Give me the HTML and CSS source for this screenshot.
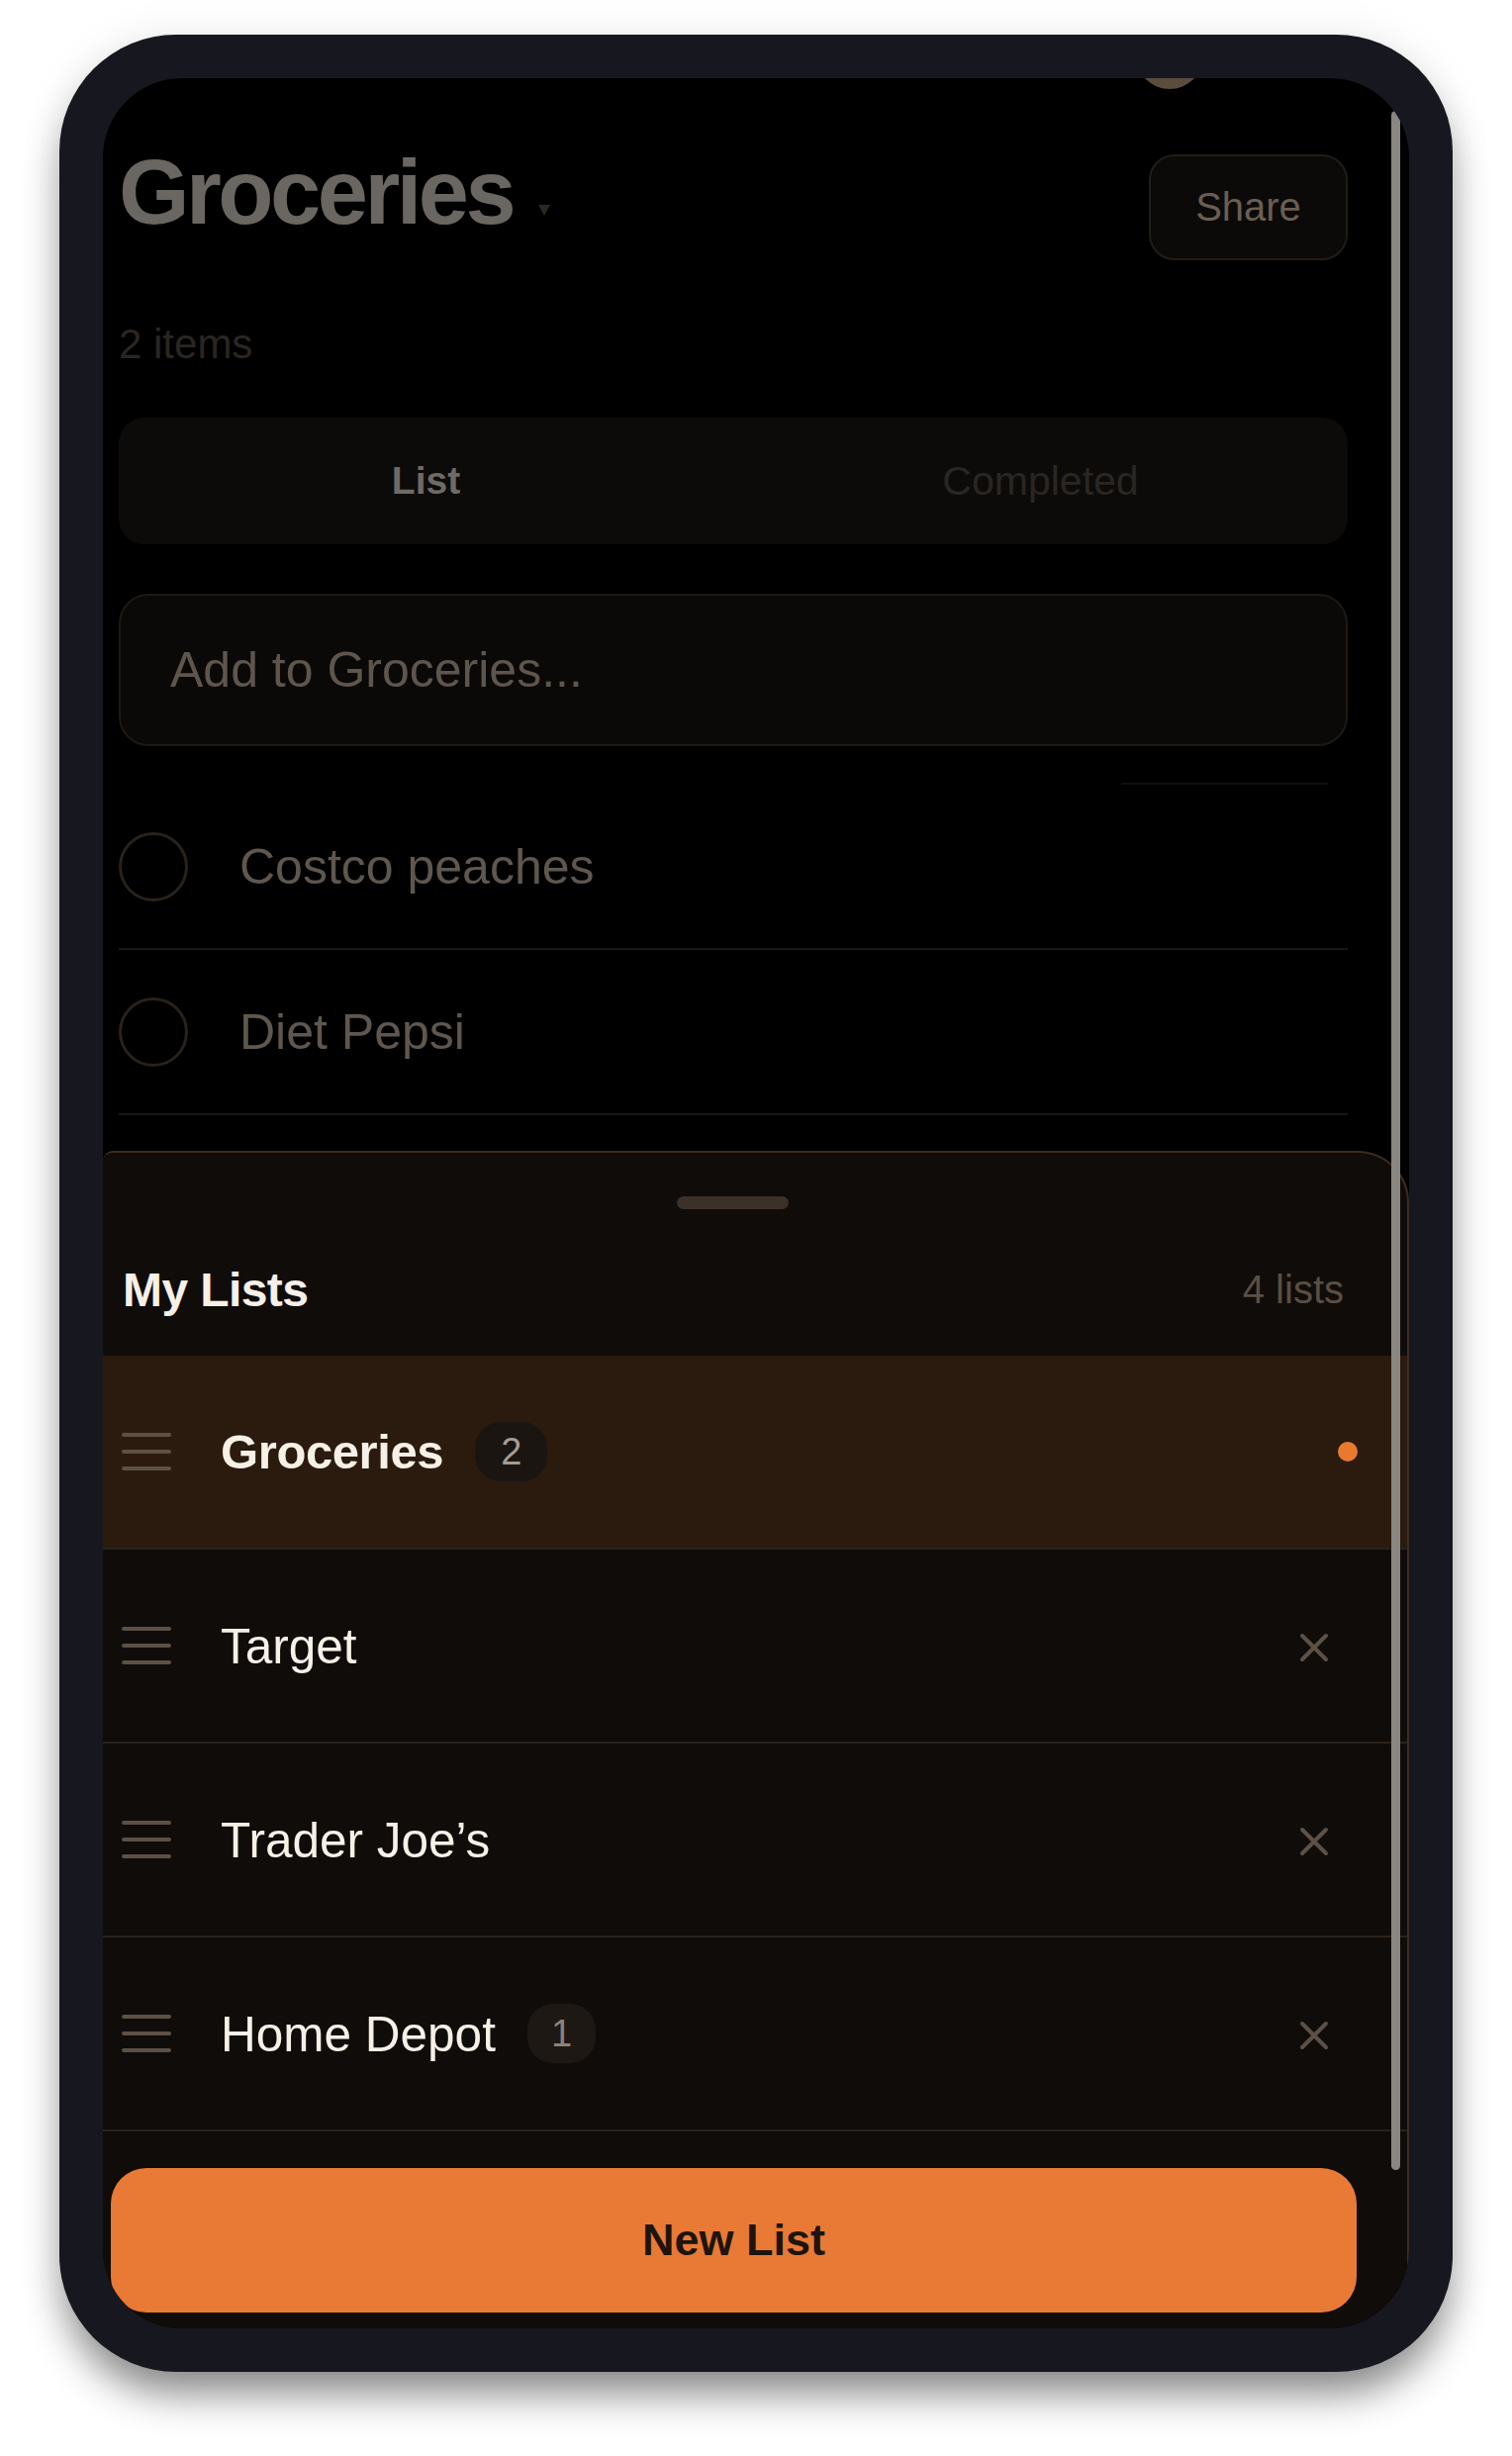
FILE: index.html
```html
<!DOCTYPE html>
<html lang="en">
<head>
<meta charset="utf-8">
<title>Groceries</title>
<link rel="stylesheet" href="styles.css">
</head>
<body>
<div class="device">
  <div class="screen">
    <div class="avatar"></div>
    <main class="page">
      <header class="page-head">
        <div class="title-wrap">
          <h1 class="title">Groceries</h1>
          <span class="caret"></span>
        </div>
        <button class="share">Share</button>
      </header>
      <p class="count">2 items</p>
      <div class="segmented">
        <div class="seg seg-active">List</div>
        <div class="seg">Completed</div>
      </div>
      <div class="add-input">Add to Groceries...</div>
      <div class="hint-line"></div>
      <ul class="items">
        <li class="item"><span class="check"></span><span class="item-label">Costco peaches</span></li>
        <li class="item"><span class="check"></span><span class="item-label">Diet Pepsi</span></li>
      </ul>
    </main>

    <section class="sheet">
      <div class="grabber-row"><div class="grabber"></div></div>
      <div class="sheet-head">
        <h2 class="sheet-title">My Lists</h2>
        <span class="sheet-count">4 lists</span>
      </div>
      <ul class="lists">
        <li class="list-row selected">
          <svg class="drag" width="50" height="40" viewBox="0 0 50 40"><rect x="0" y="1" width="50" height="4" rx="2"/><rect x="0" y="18" width="50" height="4" rx="2"/><rect x="0" y="35" width="50" height="4" rx="2"/></svg>
          <span class="list-name strong">Groceries</span>
          <span class="badge">2</span>
          <span class="dot"></span>
        </li>
        <li class="list-row">
          <svg class="drag" width="50" height="40" viewBox="0 0 50 40"><rect x="0" y="1" width="50" height="4" rx="2"/><rect x="0" y="18" width="50" height="4" rx="2"/><rect x="0" y="35" width="50" height="4" rx="2"/></svg>
          <span class="list-name">Target</span>
          <svg class="remove" width="30" height="30" viewBox="0 0 30 30"><path d="M3 3 L27 27 M27 3 L3 27"/></svg>
        </li>
        <li class="list-row">
          <svg class="drag" width="50" height="40" viewBox="0 0 50 40"><rect x="0" y="1" width="50" height="4" rx="2"/><rect x="0" y="18" width="50" height="4" rx="2"/><rect x="0" y="35" width="50" height="4" rx="2"/></svg>
          <span class="list-name">Trader Joe’s</span>
          <svg class="remove" width="30" height="30" viewBox="0 0 30 30"><path d="M3 3 L27 27 M27 3 L3 27"/></svg>
        </li>
        <li class="list-row">
          <svg class="drag" width="50" height="40" viewBox="0 0 50 40"><rect x="0" y="1" width="50" height="4" rx="2"/><rect x="0" y="18" width="50" height="4" rx="2"/><rect x="0" y="35" width="50" height="4" rx="2"/></svg>
          <span class="list-name">Home Depot</span>
          <span class="badge badge-dim">1</span>
          <svg class="remove" width="30" height="30" viewBox="0 0 30 30"><path d="M3 3 L27 27 M27 3 L3 27"/></svg>
        </li>
      </ul>
      <div class="sheet-foot">
        <button class="new-list">New List</button>
      </div>
    </section>

    <div class="scrollbar"></div>
  </div>
</div>
</body>
</html>
```

FILE: styles.css
```css
* { box-sizing: border-box; }

html, body {
  margin: 0;
  background: #ffffff;
}

body {
  padding: 35px 60px 85px;
  font-family: "Liberation Sans", Arial, sans-serif;
}

.device {
  width: 1408px;
  height: 2362px;
  padding: 44px;
  background: #17181f;
  border-radius: 118px;
  box-shadow: 0 28px 40px -6px rgba(0, 0, 0, 0.45), 0 0 40px 6px rgba(0, 0, 0, 0.06);
}

.screen {
  position: relative;
  width: 1320px;
  height: 2274px;
  background: #000;
  border-radius: 80px;
  overflow: hidden;
}

.avatar {
  position: absolute;
  left: 1044px;
  top: -57px;
  width: 68px;
  height: 68px;
  border-radius: 50%;
  background: #5b4c3e;
}

/* ---------- background page (dimmed) ---------- */
.page {
  padding: 0 62px 0 16px;
}

.page-head {
  display: flex;
  justify-content: space-between;
  align-items: flex-start;
  padding-top: 63px;
}

.title-wrap {
  display: flex;
  align-items: flex-start;
}

.title {
  margin: 0;
  font-size: 92px;
  font-weight: 700;
  letter-spacing: -3.5px;
  color: #6a6661;
  line-height: 105px;
}

.caret {
  margin: 65px 0 0 26px;
  width: 0;
  height: 0;
  border-left: 6px solid transparent;
  border-right: 6px solid transparent;
  border-top: 11px solid #2e2720;
}

.share {
  margin-top: 14px;
  width: 201px;
  height: 107px;
  border-radius: 26px;
  border: 2px solid #221c17;
  background: #0b0a09;
  color: #6b5e51;
  font-family: inherit;
  font-size: 40px;
  padding: 0;
}

.count {
  margin: 61px 0 0;
  font-size: 42px;
  line-height: 48px;
  color: #2b2621;
}

.segmented {
  margin-top: 50px;
  height: 128px;
  border-radius: 26px;
  background: #0c0b0a;
  display: grid;
  grid-template-columns: 1fr 1fr;
  align-items: center;
}

.seg {
  text-align: center;
  font-size: 41px;
  font-weight: 400;
  color: #2b2622;
}

.seg-active {
  font-size: 39px;
  font-weight: 700;
  color: #6e6a64;
}

.add-input {
  margin-top: 50px;
  height: 154px;
  border-radius: 30px;
  border: 2px solid #1e1914;
  background: #0a0908;
  display: flex;
  align-items: center;
  padding-left: 50px;
  font-size: 50px;
  color: #5e554c;
}

.hint-line {
  margin: 37px 20px 0 auto;
  width: 209px;
  height: 2px;
  background: #110f0d;
}

.items {
  list-style: none;
  margin: 0;
  padding: 0;
}

.item {
  height: 167px;
  border-bottom: 2px solid #1a1612;
  display: flex;
  align-items: center;
}

.check {
  width: 70px;
  height: 70px;
  border-radius: 50%;
  border: 3px solid #29221b;
  flex: none;
}

.item-label {
  margin-left: 52px;
  font-size: 50px;
  color: #5f574f;
}

/* ---------- bottom sheet ---------- */
.sheet {
  position: absolute;
  left: 0;
  right: 0;
  bottom: 0;
  height: 1190px;
  background: #0f0c0a;
  border-top: 2px solid #3b2d21;
  border-right: 2px solid #3b2d21;
  border-radius: 10px 52px 0 0;
  display: flex;
  flex-direction: column;
}

.grabber-row {
  display: flex;
  justify-content: center;
  padding: 44px 46px 0 0;
}

.grabber {
  width: 113px;
  height: 13px;
  border-radius: 7px;
  background: #3c3129;
}

.sheet-head {
  height: 148px;
  padding: 14px 64px 0 20px;
  display: flex;
  align-items: center;
  justify-content: space-between;
}

.sheet-title {
  margin: 0;
  font-size: 48px;
  font-weight: 700;
  letter-spacing: -0.6px;
  color: #f6f0e7;
}

.sheet-count {
  font-size: 40px;
  color: #5b4e42;
}

.lists {
  list-style: none;
  margin: 0;
  padding: 0;
}

.list-row {
  height: 196px;
  border-bottom: 2px solid #2b2119;
  display: flex;
  align-items: center;
  padding: 0 50px 0 19px;
}

.list-row.selected {
  background: #2a1b0e;
}

.drag {
  flex: none;
  fill: #5d5045;
  margin-right: 50px;
}

.list-name {
  font-size: 49.5px;
  color: #f6f0e7;
}

.list-name.strong {
  font-size: 49px;
  font-weight: 700;
  letter-spacing: -0.4px;
}

.badge {
  margin-left: 32px;
  height: 60px;
  padding: 0 26px;
  border-radius: 26px;
  background: #1b1511;
  color: #a59c92;
  font-size: 38px;
  display: flex;
  align-items: center;
}

.badge-dim {
  padding: 0 24px;
  background: #1d1814;
  color: #8c8278;
}

.dot {
  margin-left: auto;
  width: 20px;
  height: 20px;
  border-radius: 50%;
  background: #e8792f;
}

.remove {
  flex: none;
  margin-left: auto;
  margin-right: 29px;
  margin-top: 4px;
  fill: none;
  stroke: #5d5046;
  stroke-width: 4;
  stroke-linecap: round;
}

.sheet-foot {
  padding: 37px 51px 0 8px;
}

.new-list {
  width: 100%;
  height: 146px;
  border: none;
  border-radius: 36px;
  background: #e87a35;
  color: #1e140c;
  font-family: inherit;
  font-size: 45px;
  font-weight: 700;
  padding: 0;
}

.scrollbar {
  position: absolute;
  left: 1302px;
  top: 33px;
  width: 9px;
  height: 2081px;
  border-radius: 5px;
  background: #8a8783;
}
```
